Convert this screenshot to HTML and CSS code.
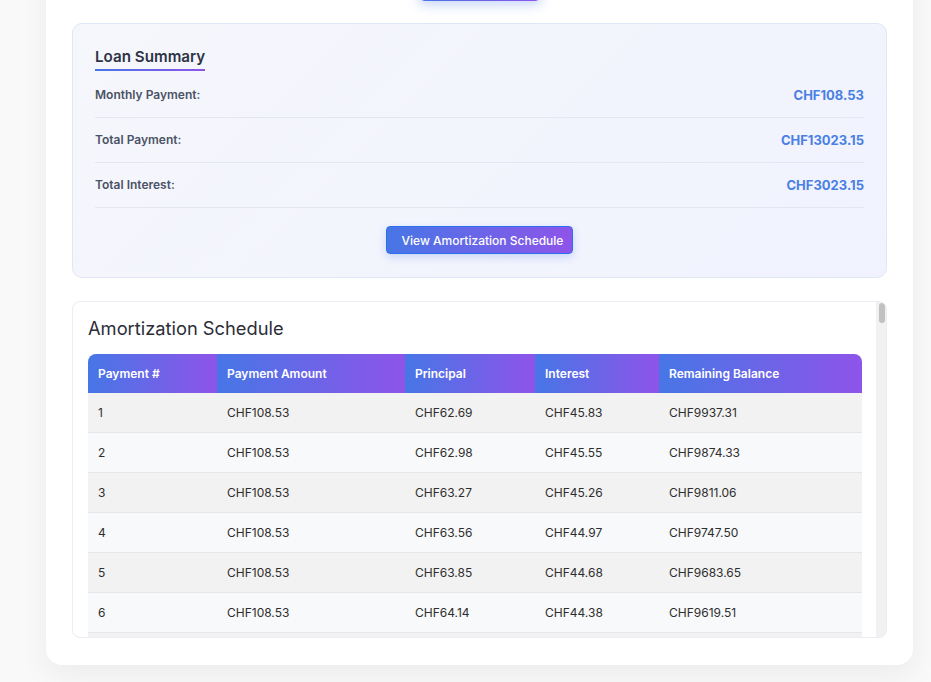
FILE: index.html
```html
<!DOCTYPE html>
<html lang="en">
<head>
<meta charset="utf-8">
<title>Loan Calculator</title>
<link rel="stylesheet" href="styles.css">
</head>
<body>
<div class="container">
  <div class="actions">
    <button class="btn-calc" type="button">Calculate</button>
  </div>

  <section class="summary">
    <h3 class="summary-title">Loan Summary</h3>
    <div class="summary-row">
      <span class="summary-label">Monthly Payment:</span>
      <span class="summary-value">CHF108.53</span>
    </div>
    <div class="summary-row">
      <span class="summary-label">Total Payment:</span>
      <span class="summary-value">CHF13023.15</span>
    </div>
    <div class="summary-row">
      <span class="summary-label">Total Interest:</span>
      <span class="summary-value">CHF3023.15</span>
    </div>
    <div class="summary-actions">
      <button class="btn-schedule" type="button">View Amortization Schedule</button>
    </div>
  </section>

  <section class="schedule">
    <div class="schedule-scroll">
      <h2 class="schedule-title">Amortization Schedule</h2>
      <table class="schedule-table">
        <colgroup>
          <col class="c1"><col class="c2"><col class="c3"><col class="c4"><col class="c5">
        </colgroup>
        <thead>
          <tr>
            <th>Payment #</th>
            <th>Payment Amount</th>
            <th>Principal</th>
            <th>Interest</th>
            <th>Remaining Balance</th>
          </tr>
        </thead>
        <tbody id="schedule-body"></tbody>
      </table>
    </div>
    <div class="scrollbar"><div class="scrollbar-thumb"></div></div>
  </section>
</div>
<script src="script.js"></script>
</body>
</html>
```

FILE: styles.css
```css
* { box-sizing: border-box; }

html, body {
  margin: 0;
  padding: 0;
}

body {
  background: #f9f9fa;
  font-family: Inter, "Noto Sans", "Liberation Sans", sans-serif;
  color: #333;
  overflow: hidden;
  height: 682px;
}

.container {
  width: 867px;
  margin: -59px 0 0 46px;
  padding: 20px 26px 27px 26px;
  background: #ffffff;
  border-radius: 16px;
  box-shadow: 0 10px 30px rgba(0, 0, 0, 0.06);
}

.actions {
  display: flex;
  justify-content: center;
}

.btn-calc {
  width: 122px;
  height: 40px;
  border: none;
  border-radius: 6px;
  background: linear-gradient(90deg, #4776e6, #8e54e9);
  color: #fff;
  font-family: inherit;
  font-size: 14px;
  font-weight: 600;
  box-shadow: 0 4px 12px rgba(71, 118, 230, 0.3);
}

.summary {
  margin-top: 22px;
  padding: 22px 22px 23px 22px;
  border: 1px solid #e0e6f6;
  border-radius: 10px;
  background: linear-gradient(135deg, #f6f7fc 0%, #f0f2fe 100%);
}

.summary-title {
  display: block;
  width: fit-content;
  position: relative;
  margin: 0 0 2px 0;
  padding: 1px 0 4px 0;
  font-size: 15.2px;
  line-height: 20px;
  font-weight: 600;
  color: #2d3446;
}

.summary-title::after {
  content: "";
  position: absolute;
  left: 0;
  right: 0;
  bottom: 0;
  height: 2px;
  background: linear-gradient(90deg, #4776e6, #8e54e9);
}

.summary-row {
  display: flex;
  justify-content: space-between;
  align-items: center;
  padding: 12px 0;
  line-height: 20px;
  border-bottom: 1px solid #e3e7f2;
}

.summary-label {
  font-size: 12px;
  font-weight: 600;
  color: #4a5365;
}

.summary-value {
  font-size: 13px;
  font-weight: 700;
  color: #4a7fe3;
}

.summary-actions {
  display: flex;
  justify-content: center;
  margin-top: 18px;
}

.btn-schedule {
  height: 28px;
  padding: 0 9px 0 15px;
  border: 1px solid #2a6ff0;
  border-radius: 4px;
  background: linear-gradient(90deg, #4776e6, #8e54e9);
  color: #fff;
  font-family: inherit;
  font-size: 12px;
  font-weight: 500;
  box-shadow: 0 3px 8px rgba(71, 118, 230, 0.25);
}

.schedule {
  display: flex;
  margin-top: 23px;
  height: 337px;
  background: #fff;
  border: 1px solid #ececf4;
  border-radius: 8px;
  overflow: hidden;
}

.schedule-scroll {
  flex: 1;
  overflow-y: auto;
  scrollbar-width: none;
  padding: 15px 13px 0 15px;
}

.schedule-scroll::-webkit-scrollbar {
  display: none;
}

.scrollbar {
  width: 10px;
  flex: none;
  padding: 1px 1px 0 3px;
  background: #f1f1f1;
}

.scrollbar-thumb {
  height: 20px;
  border-radius: 3px;
  background: #c1c1c1;
}

.schedule-title {
  margin: 0 0 15px 0;
  font-size: 18.3px;
  line-height: 22px;
  font-weight: 400;
  color: #2b2d38;
}

.schedule-table {
  width: 774px;
  table-layout: fixed;
  border-collapse: separate;
  border-spacing: 0;
  font-size: 12px;
}

.c1 { width: 129px; }
.c2 { width: 188px; }
.c3 { width: 130px; }
.c4 { width: 124px; }
.c5 { width: 203px; }

.schedule-table th {
  padding: 12px 10px;
  line-height: 15px;
  text-align: left;
  font-weight: 600;
  color: #fff;
  background: linear-gradient(90deg, #4776e6, #8e54e9);
}

.schedule-table th:first-child { border-top-left-radius: 8px; }
.schedule-table th:last-child { border-top-right-radius: 8px; }

.schedule-table td {
  padding: 12px 10px;
  line-height: 15px;
  color: #2e2e2e;
  border-bottom: 1px solid #e4e6ea;
}

.schedule-table tbody tr:nth-child(odd) td { background: #f2f2f2; }
.schedule-table tbody tr:nth-child(even) td { background: #f8f9fa; }
```

FILE: script.js
```js
(function () {
  var principal = 10000;
  var rate = 0.055 / 12;
  var n = 120;
  var payment = principal * rate / (1 - Math.pow(1 + rate, -n));
  var balance = principal;
  var body = document.getElementById('schedule-body');
  var html = '';
  for (var i = 1; i <= n; i++) {
    var interest = balance * rate;
    var princ = payment - interest;
    balance = balance - princ;
    if (balance < 0) balance = 0;
    html += '<tr><td>' + i + '</td><td>CHF' + payment.toFixed(2) +
      '</td><td>CHF' + princ.toFixed(2) + '</td><td>CHF' + interest.toFixed(2) +
      '</td><td>CHF' + balance.toFixed(2) + '</td></tr>';
  }
  body.innerHTML = html;
})();
```
